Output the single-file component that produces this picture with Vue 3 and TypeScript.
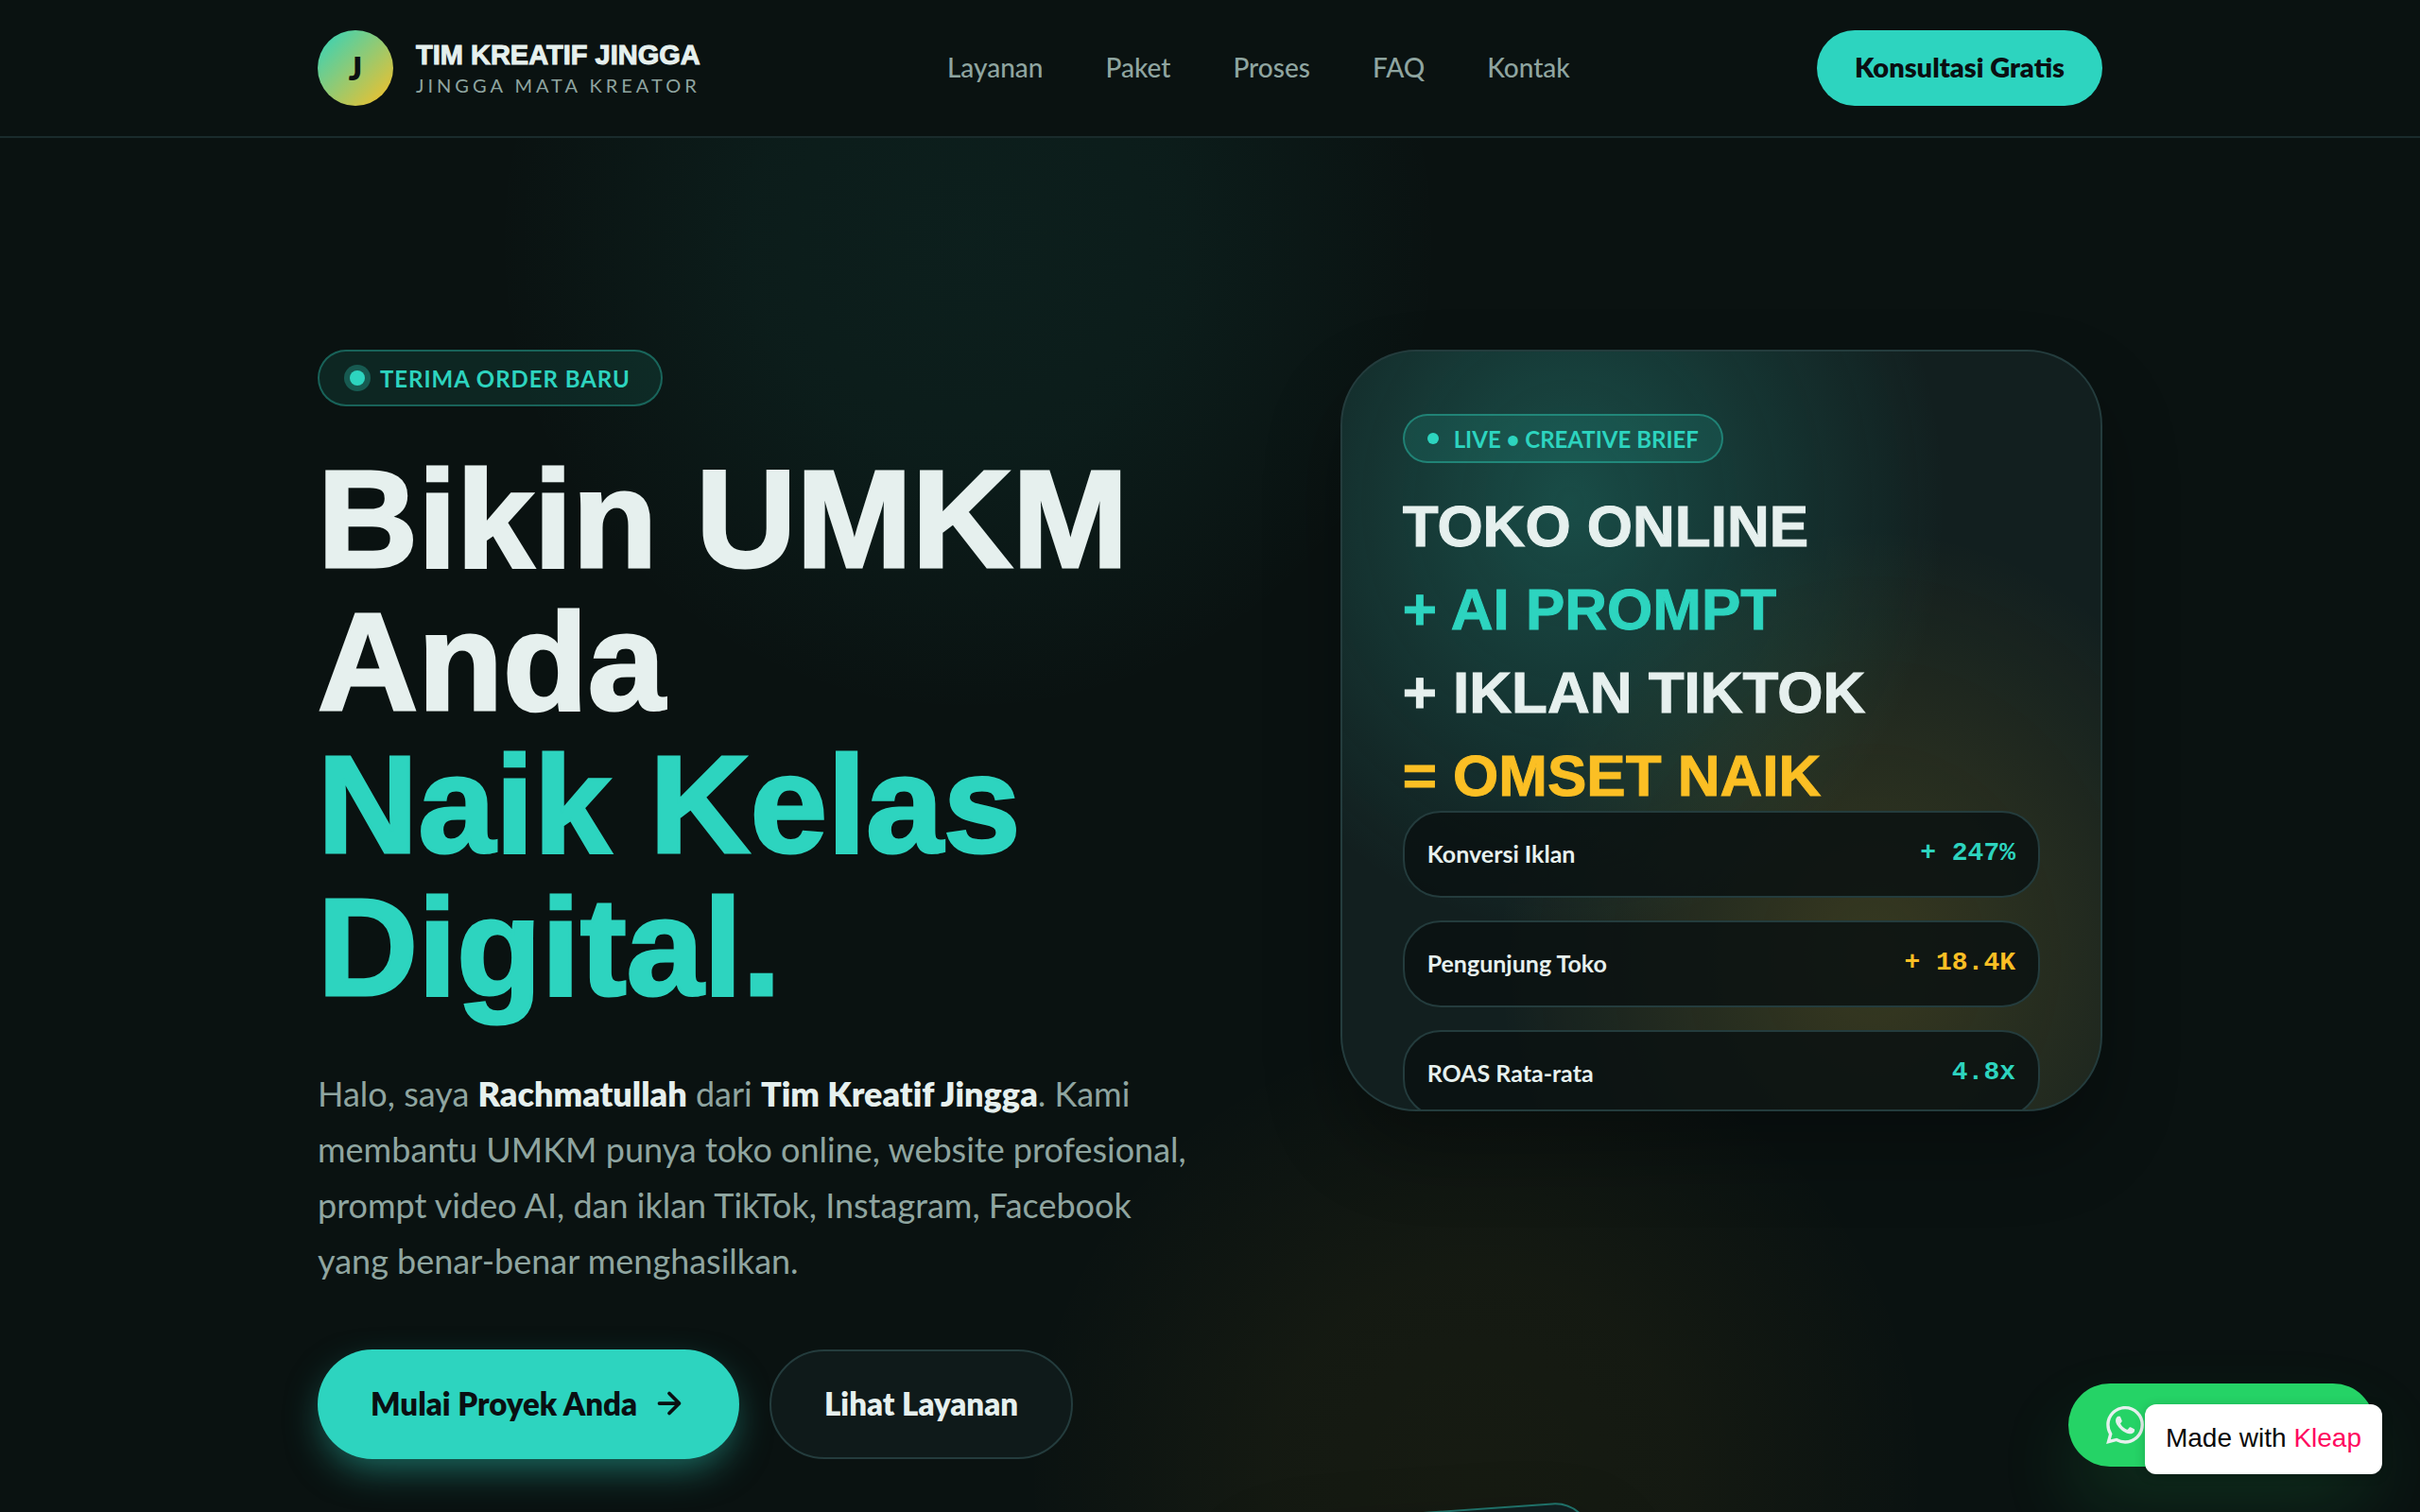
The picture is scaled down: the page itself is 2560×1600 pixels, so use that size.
<script setup lang="ts">
interface Metric {
  label: string
  value: string
  tone: 'teal' | 'amber'
}

const navLinks: string[] = ['Layanan', 'Paket', 'Proses', 'FAQ', 'Kontak']

const briefLines: { text: string; tone: string }[] = [
  { text: 'TOKO ONLINE', tone: 'light' },
  { text: '+ AI PROMPT', tone: 'teal' },
  { text: '+ IKLAN TIKTOK', tone: 'light' },
  { text: '= OMSET NAIK', tone: 'amber' },
]

const metrics: Metric[] = [
  { label: 'Konversi Iklan', value: '+ 247%', tone: 'teal' },
  { label: 'Pengunjung Toko', value: '+ 18.4K', tone: 'amber' },
  { label: 'ROAS Rata-rata', value: '4.8x', tone: 'teal' },
]
</script>

<template>
  <div class="page">
    <header class="header">
      <div class="container header-inner">
        <a class="brand" href="#">
          <span class="brand-mark">J</span>
          <span class="brand-text">
            <span class="brand-name">TIM KREATIF JINGGA</span>
            <span class="brand-sub">JINGGA MATA KREATOR</span>
          </span>
        </a>
        <nav class="nav">
          <a v-for="link in navLinks" :key="link" href="#">{{ link }}</a>
        </nav>
        <button class="header-cta" type="button">Konsultasi Gratis</button>
      </div>
    </header>

    <main class="hero container">
      <section class="intro">
        <div class="status"><span class="status-dot"></span>TERIMA ORDER BARU</div>
        <h1 class="title">Bikin UMKM Anda <span class="title-accent">Naik Kelas Digital.</span></h1>
        <p class="lead">
          Halo, saya <strong>Rachmatullah</strong> dari <strong>Tim Kreatif Jingga</strong>. Kami
          membantu UMKM punya toko online, website profesional, prompt video AI, dan iklan TikTok,
          Instagram, Facebook yang benar-benar menghasilkan.
        </p>
        <div class="actions">
          <button class="btn btn-primary" type="button">
            Mulai Proyek Anda
            <svg class="arrow" viewBox="0 0 24 24" aria-hidden="true">
              <path d="M5 12h14M12 5l7 7-7 7" />
            </svg>
          </button>
          <button class="btn btn-ghost" type="button">Lihat Layanan</button>
        </div>
      </section>

      <section class="visual">
        <div class="card">
          <div class="live"><span class="live-dot"></span>LIVE • CREATIVE BRIEF</div>
          <div class="brief">
            <span v-for="line in briefLines" :key="line.text" :class="line.tone">{{ line.text }}</span>
          </div>
          <ul class="metrics">
            <li v-for="m in metrics" :key="m.label" class="metric">
              <span class="metric-label">{{ m.label }}</span>
              <span class="metric-value" :class="m.tone">{{ m.value }}</span>
            </li>
          </ul>
        </div>
      </section>
    </main>
    <div class="floating-chip"></div>

    <a class="whatsapp" href="#" aria-label="WhatsApp">
      <svg viewBox="0 0 24 24" aria-hidden="true">
        <path
          d="M17.472 14.382c-.297-.149-1.758-.867-2.03-.967-.273-.099-.471-.148-.67.15-.197.297-.767.966-.94 1.164-.173.199-.347.223-.644.075-.297-.15-1.255-.463-2.39-1.475-.883-.788-1.48-1.761-1.653-2.059-.173-.297-.018-.458.13-.606.134-.133.298-.347.446-.52.149-.174.198-.298.298-.497.099-.198.05-.371-.025-.52-.075-.149-.669-1.612-.916-2.207-.242-.579-.487-.5-.669-.51-.173-.008-.371-.01-.57-.01-.198 0-.52.074-.792.372-.272.297-1.04 1.016-1.04 2.479 0 1.462 1.065 2.875 1.213 3.074.149.198 2.096 3.2 5.077 4.487.709.306 1.262.489 1.694.625.712.227 1.36.195 1.871.118.571-.085 1.758-.719 2.006-1.413.248-.694.248-1.289.173-1.413-.074-.124-.272-.198-.57-.347m-5.421 7.403h-.004a9.87 9.87 0 01-5.031-1.378l-.361-.214-3.741.982.998-3.648-.235-.374a9.86 9.86 0 01-1.51-5.26c.001-5.45 4.436-9.884 9.888-9.884 2.64 0 5.122 1.03 6.988 2.898a9.825 9.825 0 012.893 6.994c-.003 5.45-4.437 9.884-9.885 9.884m8.413-18.297A11.815 11.815 0 0012.05 0C5.495 0 .16 5.335.157 11.892c0 2.096.547 4.142 1.588 5.945L.057 24l6.305-1.654a11.882 11.882 0 005.683 1.448h.005c6.554 0 11.89-5.335 11.893-11.893a11.821 11.821 0 00-3.48-8.413z"
        />
      </svg>
    </a>
    <a class="made-with" href="#">Made with <span>Kleap</span></a>
  </div>
</template>

<style>
body {
  margin: 0;
  background: #0a1211;
}
</style>

<style scoped>
.page {
  --teal: #2dd4bf;
  --amber: #fbbf24;
  --light: #e6f0ee;
  --muted: #8fa5a0;
  --ink: #0a0f12;
  --line: #243c3d;
  --display: 'Liberation Sans', Arial, sans-serif;
  position: relative;
  min-height: 100vh;
  max-height: 100vh;
  overflow: hidden;
  background:
    radial-gradient(circle 500px at 40% 256px, rgba(45, 212, 191, 0.065), rgba(45, 212, 191, 0.055) 45%, rgba(45, 212, 191, 0.015) 85%, transparent),
    radial-gradient(circle 480px at 61% 1560px, rgba(251, 191, 36, 0.05), rgba(251, 191, 36, 0.045) 45%, rgba(251, 191, 36, 0.01) 85%, transparent),
    #0a1211;
  color: var(--light);
  font-family: Lato, sans-serif;
  font-variant-ligatures: none;
}
.container {
  width: calc(100% - 128px);
  max-width: 1888px;
  margin: 0 auto;
}
a {
  color: inherit;
  text-decoration: none;
}
button {
  font-family: inherit;
  border: 0;
  cursor: pointer;
}
.teal {
  color: var(--teal);
}
.amber {
  color: var(--amber);
}

.header {
  background: #0a1211;
  border-bottom: 2px solid #1a2b2c;
}
.header-inner {
  display: flex;
  align-items: center;
  justify-content: space-between;
  height: 144px;
}
.brand {
  display: flex;
  align-items: center;
  gap: 24px;
}
.brand-mark {
  display: grid;
  place-items: center;
  width: 80px;
  height: 80px;
  border-radius: 50%;
  background: linear-gradient(135deg, #2dd4bf, #fbbf24);
  color: var(--ink);
  font: 800 33px/40px Lato, sans-serif;
}
.brand-text {
  display: flex;
  flex-direction: column;
}
.brand-name {
  font: 700 29px/36px var(--display);
  -webkit-text-stroke: 1px currentColor;
}
.brand-sub {
  color: var(--muted);
  font-size: 20px;
  line-height: 28px;
  letter-spacing: 0.2em;
}
.nav {
  display: flex;
  gap: 66px;
  padding-bottom: 2px;
  color: var(--muted);
  font-size: 28px;
  line-height: 40px;
  font-weight: 500;
}
.header-cta {
  height: 80px;
  padding: 0 40px 4px;
  border-radius: 40px;
  background: var(--teal);
  color: var(--ink);
  font-size: 29px;
  font-weight: 800;
}

.hero {
  display: grid;
  grid-template-columns: minmax(0, 1.2fr) minmax(0, 1fr);
  gap: 114px;
  align-items: start;
  padding-top: 224px;
}
.status {
  display: flex;
  align-items: center;
  gap: 16px;
  width: fit-content;
  height: 60px;
  padding: 0 32px;
  box-sizing: border-box;
  border: 2px solid rgba(45, 212, 191, 0.35);
  border-radius: 30px;
  background: rgba(45, 212, 191, 0.1);
  color: var(--teal);
  font-size: 24px;
  font-weight: 700;
  letter-spacing: 0.04em;
}
.status-dot {
  width: 16px;
  height: 16px;
  border-radius: 50%;
  background: var(--teal);
  box-shadow: 0 0 0 6px rgba(45, 212, 191, 0.3);
}
.title {
  margin: 44px 0 50px;
  font: 700 147px/151px var(--display);
  -webkit-text-stroke: 3px currentColor;
}
.title-accent {
  display: block;
  color: var(--teal);
}
.lead {
  max-width: 936px;
  margin: 0;
  color: var(--muted);
  font-size: 36px;
  line-height: 59px;
}
.lead strong {
  color: var(--light);
  font-weight: 800;
}
.actions {
  display: flex;
  gap: 32px;
  margin-top: 64px;
}
.btn {
  display: flex;
  align-items: center;
  gap: 16px;
  height: 116px;
  padding: 0 56px 2px;
  box-sizing: border-box;
  border-radius: 58px;
  font-size: 33px;
  font-weight: 800;
}
.btn-primary {
  background: var(--teal);
  color: var(--ink);
  box-shadow: 0 16px 40px -8px rgba(45, 212, 191, 0.5);
}
.btn-ghost {
  border: 2px solid var(--line);
  background: #0f1a1a;
  color: var(--light);
}
.arrow {
  width: 36px;
  height: 36px;
  fill: none;
  stroke: currentColor;
  stroke-width: 2.5;
  stroke-linecap: round;
  stroke-linejoin: round;
}

.card {
  box-sizing: border-box;
  aspect-ratio: 1;
  padding: 66px 64px;
  border: 2px solid var(--line);
  border-radius: 80px;
  overflow: hidden;
  background:
    radial-gradient(ellipse at 30% 20%, rgba(45, 212, 191, 0.25), transparent 50%),
    radial-gradient(ellipse at 70% 80%, rgba(251, 191, 36, 0.16), transparent 50%),
    #121f1f;
  box-shadow: 0 40px 80px rgba(0, 0, 0, 0.3);
}
.live {
  display: flex;
  align-items: center;
  gap: 16px;
  width: fit-content;
  height: 52px;
  padding: 0 24px;
  box-sizing: border-box;
  border: 2px solid rgba(45, 212, 191, 0.4);
  border-radius: 26px;
  background: rgba(45, 212, 191, 0.12);
  color: var(--teal);
  font-size: 24px;
  font-weight: 700;
}
.live-dot {
  width: 12px;
  height: 12px;
  border-radius: 50%;
  background: var(--teal);
}
.brief {
  display: flex;
  flex-direction: column;
  margin-top: 23px;
  font: 700 62px/88px var(--display);
  -webkit-text-stroke: 1px currentColor;
}
.metrics {
  display: flex;
  flex-direction: column;
  gap: 24px;
  margin: -7px 0 0;
  padding: 0;
  list-style: none;
}
.metric {
  display: flex;
  align-items: center;
  justify-content: space-between;
  height: 92px;
  box-sizing: border-box;
  padding: 0 24px 2px;
  border: 2px solid var(--line);
  border-radius: 40px;
  background: rgba(10, 18, 18, 0.85);
}
.metric-label {
  font-size: 25px;
  font-weight: 700;
}
.metric-value {
  font: 700 28px/40px 'Liberation Mono', monospace;
}

.floating-chip {
  position: absolute;
  left: 1328px;
  top: 1600px;
  width: 360px;
  height: 160px;
  box-sizing: border-box;
  border: 2px solid #1f7068;
  border-radius: 40px;
  background: #101e1f;
  box-shadow: 0 40px 80px rgba(0, 0, 0, 0.4);
  transform: rotate(-4deg);
}
.whatsapp {
  position: absolute;
  right: 48px;
  bottom: 48px;
  display: flex;
  align-items: center;
  box-sizing: border-box;
  width: 324px;
  height: 88px;
  padding: 0 40px;
  border-radius: 44px;
  background: #25d366;
  box-shadow: 0 40px 80px rgba(37, 211, 102, 0.15);
}
.whatsapp svg {
  width: 40px;
  height: 40px;
  fill: var(--light);
}
.made-with {
  position: absolute;
  right: 40px;
  bottom: 40px;
  padding: 0 22px 2px;
  border-radius: 12px;
  background: #fff;
  box-shadow: 0 2px 12px rgba(0, 0, 0, 0.2);
  color: #0a0a0a;
  font: 28px/72px 'Liberation Sans', sans-serif;
}
.made-with span {
  color: #ff0a5f;
}
</style>
